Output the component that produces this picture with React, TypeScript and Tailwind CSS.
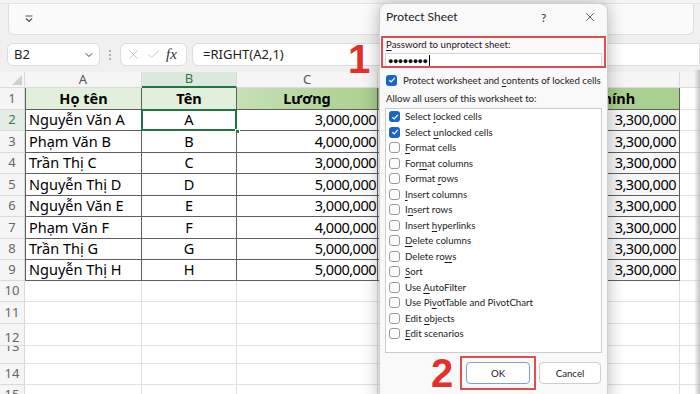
import { X, Check, ChevronDown } from "lucide-react";

const people = [
  ["Nguyễn Văn A", "A", "3,000,000"],
  ["Phạm Văn B", "B", "4,000,000"],
  ["Trần Thị C", "C", "3,000,000"],
  ["Nguyễn Thị D", "D", "5,000,000"],
  ["Nguyễn Văn E", "E", "3,000,000"],
  ["Phạm Văn F", "F", "4,000,000"],
  ["Trần Thị G", "G", "5,000,000"],
  ["Nguyễn Thị H", "H", "5,000,000"],
];

const rowHeights = [22, 21, 22, 21, 22, 21, 22, 21, 21];
const emptyRows = [
  { n: 10, h: 21 },
  { n: 11, h: 22 },
  { n: 12, h: 22 },
  { n: 13, h: 18 },
  { n: 14, h: 21 },
  { n: 15, h: 21 },
];

// access key is wrapped in [ ]
const options: [string, boolean][] = [
  ["Select [l]ocked cells", true],
  ["Select [u]nlocked cells", true],
  ["[F]ormat cells", false],
  ["For[m]at columns", false],
  ["Format [r]ows", false],
  ["[I]nsert columns", false],
  ["I[n]sert rows", false],
  ["Insert [h]yperlinks", false],
  ["[D]elete columns", false],
  ["Delete ro[w]s", false],
  ["[S]ort", false],
  ["Use [A]utoFilter", false],
  ["Use Pi[v]otTable and PivotChart", false],
  ["Edit [o]bjects", false],
  ["[E]dit scenarios", false],
];

const Label = ({ text }: { text: string }) => {
  const m = text.match(/^(.*)\[(.)\](.*)$/);
  if (!m) return <span className="whitespace-nowrap">{text}</span>;
  return (
    <span className="whitespace-nowrap">
      {m[1]}
      <u className="underline-offset-2">{m[2]}</u>
      {m[3]}
    </span>
  );
};

const Box = ({ checked }: { checked: boolean }) =>
  checked ? (
    <div className="w-[11px] h-[11px] rounded-[3px] bg-[#1a66c2] flex items-center justify-center flex-shrink-0">
      <svg width="8" height="8" viewBox="0 0 8 8">
        <polyline points="1.3,4.2 3.2,6 6.8,1.8" fill="none" stroke="white" strokeWidth="1.2" />
      </svg>
    </div>
  ) : (
    <div className="w-[11px] h-[11px] rounded-[3px] bg-white border border-[#9a9a9a] flex-shrink-0" />
  );

const cellBase = "h-full flex items-center flex-shrink-0 border-b border-r border-[#5f5f5f]";

export default function App() {
  return (
    <div className="relative w-[700px] h-[394px] overflow-hidden bg-[#f0f0f0] font-['Noto_Sans',sans-serif]">
      {/* ribbon remains */}
      <div className="h-[4px] bg-[#f5f5f5] border-b border-[#e2e2e2]" />
      <div className="ml-[8px] mr-[6px] h-[31px] bg-[#fbfbfb] border border-t-0 border-[#dedede] rounded-b-md flex items-center pl-[15px]">
        <svg width="10" height="10" viewBox="0 0 10 10">
          <line x1="1.5" y1="2" x2="8.5" y2="2" stroke="#555" strokeWidth="1" />
          <polyline points="2,4.5 5,7.5 8,4.5" fill="none" stroke="#555" strokeWidth="1.2" />
        </svg>
      </div>

      {/* formula bar */}
      <div className="mt-[8px] h-[23px] flex items-center pl-[7px]">
        <div className="w-[93px] h-full bg-white border border-[#dcdcdc] rounded-md flex items-center justify-between pl-[6px] pr-[4px]">
          <span className="text-[13px] text-[#222]">B2</span>
          <ChevronDown className="w-[12px] h-[12px] text-[#444]" strokeWidth={2} />
        </div>
        <div className="w-[20px] flex flex-col items-center gap-[2px]">
          <div className="w-[2px] h-[2px] bg-[#999] rounded-full" />
          <div className="w-[2px] h-[2px] bg-[#999] rounded-full" />
          <div className="w-[2px] h-[2px] bg-[#999] rounded-full" />
        </div>
        <div className="w-[67px] h-full bg-white border border-[#dcdcdc] rounded-md flex items-center gap-[5px] pl-[5px]">
          <X className="w-[15px] h-[15px] text-[#b5b5b5]" strokeWidth={1.2} />
          <Check className="w-[15px] h-[15px] text-[#b5b5b5]" strokeWidth={1.2} />
          <span className="text-[15px] italic font-['Liberation_Serif',serif] text-[#333] leading-none">fx</span>
        </div>
        <div className="ml-[5px] flex-1 h-full bg-white border border-[#dcdcdc] rounded-l-md flex items-center pl-[10px]">
          <span className="text-[13px] text-[#222]">=RIGHT(A2,1)</span>
        </div>
      </div>

      {/* grid */}
      <div className="mt-[6px]">
        {/* column letters */}
        <div className="flex h-[16px] text-[13px] text-[#555] bg-[#f5f5f5]">
          <div className="w-[25px] h-full flex-shrink-0 relative border-r border-b border-[#dadada]">
            <svg className="absolute right-[2px] bottom-[2px]" width="10" height="10" viewBox="0 0 10 10">
              <polygon points="10,0 10,10 0,10" fill="#cfcfcf" />
            </svg>
          </div>
          <div className="w-[117px] h-full flex-shrink-0 flex items-center justify-center border-r border-b border-[#dadada]">A</div>
          <div className="w-[95px] h-full flex-shrink-0 flex items-center justify-center bg-[#dbe8de] text-[#2b7a4b] border-r border-[#dadada] border-b-2 border-b-[#217346]">B</div>
          <div className="w-[141px] h-full flex-shrink-0 flex items-center justify-center border-r border-b border-[#dadada]">C</div>
          <div className="w-[122px] h-full flex-shrink-0 flex items-center justify-center border-r border-b border-[#dadada]">D</div>
          <div className="w-[180px] h-full flex-shrink-0 flex items-center justify-center border-r border-b border-[#dadada]">E</div>
          <div className="w-[80px] h-full flex-shrink-0 border-b border-[#dadada]" />
        </div>

        <div className="text-[14.5px] text-black">
          {/* header row */}
          <div className="flex" style={{ height: rowHeights[0] }}>
            <div className="w-[25px] h-full flex-shrink-0 flex items-center justify-center bg-[#f5f5f5] text-[13px] text-[#666] border-r border-b border-[#dadada]">1</div>
            <div className={`${cellBase} w-[117px] border-l justify-center font-bold bg-[#e2efda]`}>Họ tên</div>
            <div className={`${cellBase} w-[95px] justify-center font-bold bg-[#e2efda]`}>Tên</div>
            <div className={`${cellBase} w-[141px] justify-center font-bold bg-gradient-to-r from-[#c6e0b4] to-[#a9d08e]`}>Lương</div>
            <div className={`${cellBase} w-[122px] justify-center font-bold bg-[#a9d08e]`}>Thưởng</div>
            <div className={`${cellBase} w-[180px] justify-center font-bold bg-[#a9d08e]`}>Lương chính</div>
            <div className="w-[80px] h-full flex-shrink-0 bg-white border-b border-[#e1e1e1]" />
          </div>

          {people.map(([name, short, salary], i) => (
            <div key={name} className="flex" style={{ height: rowHeights[i + 1] }}>
              <div className={`w-[25px] h-full flex-shrink-0 flex items-center justify-center text-[13px] border-r border-b border-[#dadada] ${i === 0 ? "bg-[#e4ece6] text-[#3f7a57]" : "bg-[#f5f5f5] text-[#666]"}`}>
                {i + 2}
              </div>
              <div className={`${cellBase} w-[117px] border-l bg-white pl-[3px] whitespace-nowrap overflow-hidden`}>{name}</div>
              <div className={`${cellBase} w-[95px] justify-center bg-white relative`}>
                {short}
                {i === 0 && (
                  <>
                    <div className="absolute inset-[-1px] border-2 border-[#217346]" />
                    <div className="absolute right-[-4px] bottom-[-4px] w-[5px] h-[5px] bg-[#217346] border border-white" />
                  </>
                )}
              </div>
              <div className={`${cellBase} w-[141px] justify-end pr-[1px] bg-white tracking-[-0.5px]`}>{salary}</div>
              <div className={`${cellBase} w-[122px] justify-end pr-[1px] bg-white tracking-[-0.5px]`}>500,000</div>
              <div className={`${cellBase} w-[180px] justify-end pr-[3px] bg-[#f7f7f7] tracking-[-0.5px]`}>3,300,000</div>
              <div className="w-[80px] h-full flex-shrink-0 bg-white border-b border-[#e1e1e1]" />
            </div>
          ))}

          {emptyRows.map(({ n, h }) => (
            <div key={n} className="flex" style={{ height: h }}>
              <div className={`w-[25px] h-full flex-shrink-0 flex justify-center bg-[#f5f5f5] text-[13px] text-[#666] border-r border-b border-[#dadada] overflow-hidden ${n === 12 ? "items-end" : n === 13 ? "items-start" : "items-center"}`}>
                <span className={n === 13 ? "leading-none -mt-[6px]" : n === 12 ? "leading-none mb-[1px]" : ""}>{n}</span>
              </div>
              <div className="w-[117px] h-full flex-shrink-0 bg-white border-r border-b border-[#e1e1e1]" />
              <div className="w-[95px] h-full flex-shrink-0 bg-white border-r border-b border-[#e1e1e1]" />
              <div className="w-[141px] h-full flex-shrink-0 bg-white border-r border-b border-[#e1e1e1]" />
              <div className="w-[122px] h-full flex-shrink-0 bg-white border-r border-b border-[#e1e1e1]" />
              <div className="w-[180px] h-full flex-shrink-0 bg-white border-r border-b border-[#e1e1e1]" />
              <div className="w-[80px] h-full flex-shrink-0 bg-white border-b border-[#e1e1e1]" />
            </div>
          ))}
        </div>
      </div>

      {/* right edge shade */}
      <div className="absolute right-0 top-[70px] bottom-0 w-[6px] bg-gradient-to-r from-transparent to-[#9a9a9a]/60" />

      {/* Protect Sheet dialog */}
      <div className="absolute left-[379px] top-[3px] w-[229px] h-[400px] bg-[#f9f9f9] border border-[#cfcfcf] rounded-t-lg shadow-[0_0_18px_rgba(0,0,0,0.28)] text-[9.7px] text-[#1b1b1b] font-['Lato',sans-serif]">
        <div className="h-[26px] flex items-center pl-[6px] relative">
          <span className="text-[12px] text-[#222]">Protect Sheet</span>
          <span className="absolute left-[161px] top-[5px] text-[12px] text-[#333]">?</span>
          <X className="absolute left-[203px] top-[6px] w-[14px] h-[14px] text-[#333]" strokeWidth={1.3} />
        </div>

        <div className="px-[5px]">
          <div className="h-[23px] pt-[8px] leading-[12px] pl-[1px]">
            <Label text="[P]assword to unprotect sheet:" />
          </div>
          <div className="h-[14px] bg-white border border-[#d5d5d5] flex items-center pl-[2px]">
            <span className="text-[9px] tracking-[-0.5px] text-[#111] leading-none font-['Noto_Sans',sans-serif]">●●●●●●●●</span>
            <div className="w-[1px] h-[11px] bg-black ml-[1px]" />
          </div>

          <div className="mt-[6px] h-[14px] flex items-center gap-[6px] pl-[1px]">
            <Box checked />
            <Label text="Protect worksheet and [c]ontents of locked cells" />
          </div>
          <div className="mt-[4px] h-[14px] flex items-center pl-[1px] whitespace-nowrap">Allow all users of this worksheet to:</div>

          <div className="mt-[3px] h-[245px] bg-white border border-[#cdcdcd] overflow-hidden">
            {options.map(([t, c]) => (
              <div key={t} className="h-[15.5px] flex items-center gap-[5px] pl-[3px]">
                <Box checked={c} />
                <Label text={t} />
              </div>
            ))}
          </div>

          <div className="mt-[9px] flex justify-end gap-[9px] pr-[1px]">
            <div className="w-[64px] h-[22px] bg-white border border-[#7aa3cf] rounded-[4px] flex items-center justify-center">OK</div>
            <div className="w-[62px] h-[22px] bg-white border border-[#cfcfcf] rounded-[4px] flex items-center justify-center">Cancel</div>
          </div>
        </div>
      </div>

      {/* annotations */}
      <div className="absolute left-[381px] top-[36px] w-[225px] h-[32px] border-2 border-[#dc5050]" />
      <div className="absolute left-[460px] top-[356px] w-[76px] h-[34px] border-2 border-[#dc5050]" />
      <div className="absolute left-[348px] top-[39px] text-[40px] font-bold leading-none text-[#e3302b] font-['Liberation_Sans',sans-serif]">1</div>
      <div className="absolute left-[431px] top-[353px] text-[40px] font-bold leading-none text-[#e3302b] font-['Liberation_Sans',sans-serif]">2</div>
    </div>
  );
}
